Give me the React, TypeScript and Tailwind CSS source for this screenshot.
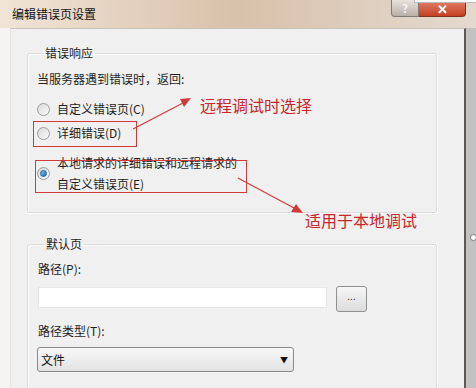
const font = "font-['Noto_Sans_CJK_SC','Liberation_Sans',sans-serif]";

function Radio({ checked }: { checked?: boolean }) {
  return (
    <span className="flex h-[13px] w-[13px] shrink-0 items-center justify-center rounded-full border border-[#9a9a9a] bg-gradient-to-br from-[#d8d8d8] to-[#fbfbfb]">
      {checked && (
        <span className="h-[7px] w-[7px] rounded-full border border-[#1c5e94] bg-gradient-to-br from-[#7ec3f0] to-[#1e6fb4]" />
      )}
    </span>
  );
}

function GroupBox({
  title,
  className,
  children,
}: {
  title: string;
  className?: string;
  children: React.ReactNode;
}) {
  return (
    <fieldset
      className={`rounded-[3px] border border-[#dadada] shadow-[inset_1px_1px_0_#fff,1px_1px_0_#fff] ${className ?? ""}`}
    >
      <legend className="ml-[6px] px-[2px] text-[12px] leading-[14px] text-[#222]">{title}</legend>
      {children}
    </fieldset>
  );
}

export default function App() {
  return (
    <div className={`relative h-[388px] w-[476px] overflow-hidden bg-[#f4f1ee] ${font} text-[12px] text-[#1e1e1e]`}>
      {/* title bar */}
      <div className="flex h-[28px] items-start bg-gradient-to-r from-[#f1e4d6] via-[#d8c1aa] to-[#e4d9cf]">
        <span className="mt-[6px] pl-[12px] text-[12px] leading-[16px] text-[#111]">编辑错误页设置</span>
        <div className="ml-auto mr-[10px] flex">
          <div className="flex h-[17px] w-[28px] items-center justify-center rounded-bl-[4px] border border-t-0 border-[#7f7a75] bg-gradient-to-b from-[#e8e2dc] to-[#b9b0a8] text-[11px] font-bold leading-none text-[#f5f5f5]">
            ?
          </div>
          <div className="flex h-[17px] w-[47px] items-center justify-center rounded-br-[4px] border border-l-0 border-t-0 border-[#7a3424] bg-gradient-to-b from-[#e6826b] to-[#c23f20] text-[13px] font-bold leading-none text-white">
            ✕
          </div>
        </div>
      </div>

      <div className="flex h-[360px]">
        <div className="w-[10px] bg-[#f6f4f2]" />
        <div className="flex-1 border-t border-l border-r-2 border-t-[#c9c3bd] border-l-[#e2e2e2] border-r-[#5e5752] bg-[#f0f0f0] pl-[16px] pr-[27px] pt-[17px]">
          <GroupBox title="错误响应" className="h-[167px] pl-[9px]">
            <div className="pt-[11px] leading-[16px]">当服务器遇到错误时，返回:</div>
            <div className="mt-[14px] flex items-center gap-[7px] leading-[16px]">
              <Radio />
              <span>自定义错误页(C)</span>
            </div>
            <div className="mt-[8px] flex items-center gap-[7px] leading-[16px]">
              <Radio />
              <span>详细错误(D)</span>
            </div>
            <div className="mt-[11px] flex items-center gap-[7px]">
              <Radio checked />
              <span className="leading-[21px]">
                本地请求的详细错误和远程请求的
                <br />
                自定义错误页(E)
              </span>
            </div>
          </GroupBox>

          <GroupBox title="默认页" className="mt-[24px] h-[160px] pl-[10px]">
            <div className="pt-[10px] leading-[16px]">路径(P):</div>
            <div className="mt-[9px] flex items-start gap-[9px]">
              <div className="mt-[1px] h-[21px] w-[289px] border border-[#e6e6e6] bg-white" />
              <div className="flex h-[26px] w-[31px] items-start justify-center rounded-[3px] border border-[#8e8f8f] bg-gradient-to-b from-[#f6f6f6] to-[#dcdcdc] text-[10px] leading-[18px] text-[#333]">
                ...
              </div>
            </div>
            <div className="mt-[11px] leading-[16px]">路径类型(T):</div>
            <div className="ml-[-1px] mt-[8px] flex h-[25px] w-[257px] items-center justify-between rounded-[3px] border border-[#8a8a8a] bg-gradient-to-b from-[#f8f8f8] to-[#e2e2e2] pl-[3px] pr-[5px]">
              <span className="text-[12px] text-[#111]">文件</span>
              <span className="text-[8px] text-[#111]">▼</span>
            </div>
          </GroupBox>
        </div>
        <div className="relative w-[10px] bg-[#c2c2c2]">
          <span className="absolute left-[4px] top-[206px] h-[7px] w-[7px] rounded-full border border-[#777] bg-white" />
        </div>
      </div>

      {/* top-right strip */}
      <div className="absolute right-0 top-0 h-[3px] w-[62px] border-b border-l border-[#bbb] bg-white" />

      {/* annotations */}
      <div className="absolute left-[33px] top-[121px] h-[26px] w-[104px] border border-[#d23a3a]" />
      <div className="absolute left-[35px] top-[160px] h-[33px] w-[212px] border border-[#d23a3a]" />
      <span className="absolute left-[200px] top-[95px] text-[16px] leading-[20px] text-[#c8262a]">远程调试时选择</span>
      <span className="absolute left-[305px] top-[210px] text-[16px] leading-[20px] text-[#c8262a]">适用于本地调试</span>
      <svg className="pointer-events-none absolute left-0 top-0" width="476" height="388">
        <line x1="133" y1="129" x2="183" y2="103" stroke="#d23a3a" strokeWidth="1.2" />
        <polygon points="191,98 180,99 184,107" fill="#d23a3a" />
        <line x1="238" y1="178" x2="294" y2="208" stroke="#d23a3a" strokeWidth="1.2" />
        <polygon points="303,213 291,212 296,204" fill="#d23a3a" />
      </svg>
    </div>
  );
}
